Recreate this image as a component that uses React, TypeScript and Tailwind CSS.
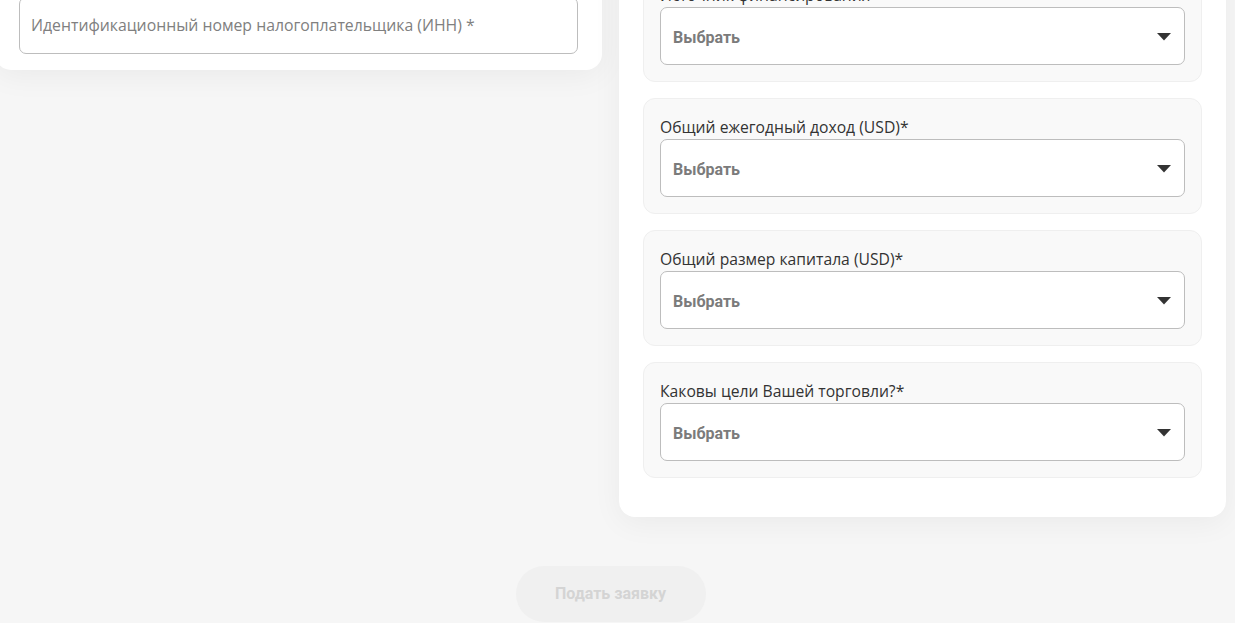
import React from "react";

const FONT = { fontFamily: '"Open Sans", "Noto Sans", sans-serif' };

const FIELDS = [
  "Источник финансирования*",
  "Общий ежегодный доход (USD)*",
  "Общий размер капитала (USD)*",
  "Каковы цели Вашей торговли?*",
];

function SelectField({ label }: { label: string }) {
  return (
    <div className="rounded-xl border border-[#efefef] bg-[#f9f9f9] px-[16px] pt-[17px] pb-[16px]">
      <div className="text-[15.7px] leading-[22px] text-[#333]">{label}</div>
      <button className="mt-[1px] flex h-[58px] w-full items-center justify-between rounded-[7px] border border-[#bdbdbd] bg-white pl-[12px] pr-[13px]">
        <span className="pt-[3px] font-['Roboto',sans-serif] text-[16px] font-bold text-[#7b7b7b]">Выбрать</span>
        <svg width="14" height="8" viewBox="0 0 14 8" className="mt-[2px]">
          <path d="M0 0 L14 0 L7 7.5 Z" fill="#333" />
        </svg>
      </button>
    </div>
  );
}

export default function App() {
  return (
    <div className="h-[623px] w-full overflow-hidden bg-[#f6f6f6]" style={FONT}>
      <div className="-ml-[5px] -mt-[58px] w-[1231px]">
        <div className="flex items-start gap-[17px]">
          <div className="w-[607px] rounded-2xl bg-white px-[24px] pt-[55px] pb-[16px] shadow-[0_6px_30px_rgba(0,0,0,0.05)]">
            <div className="flex h-[57px] items-center rounded-[7px] border border-[#bdbdbd] bg-white px-[11px]">
              <span className="text-[15.8px] text-[#808080]">
                Идентификационный номер налогоплательщика (ИНН) *
              </span>
            </div>
          </div>
          <div className="flex w-[607px] flex-col gap-[16px] rounded-2xl bg-white px-[24px] pt-[24px] pb-[39px] shadow-[0_6px_30px_rgba(0,0,0,0.05)]">
            {FIELDS.map((f) => (
              <SelectField key={f} label={f} />
            ))}
          </div>
        </div>
        <div className="mt-[49px] flex justify-center">
          <button className="h-[56px] w-[190px] rounded-full bg-[#f0f0f0] font-['Roboto',sans-serif] text-[16px] font-bold text-[#d4d4d4]">
            Подать заявку
          </button>
        </div>
      </div>
    </div>
  );
}
